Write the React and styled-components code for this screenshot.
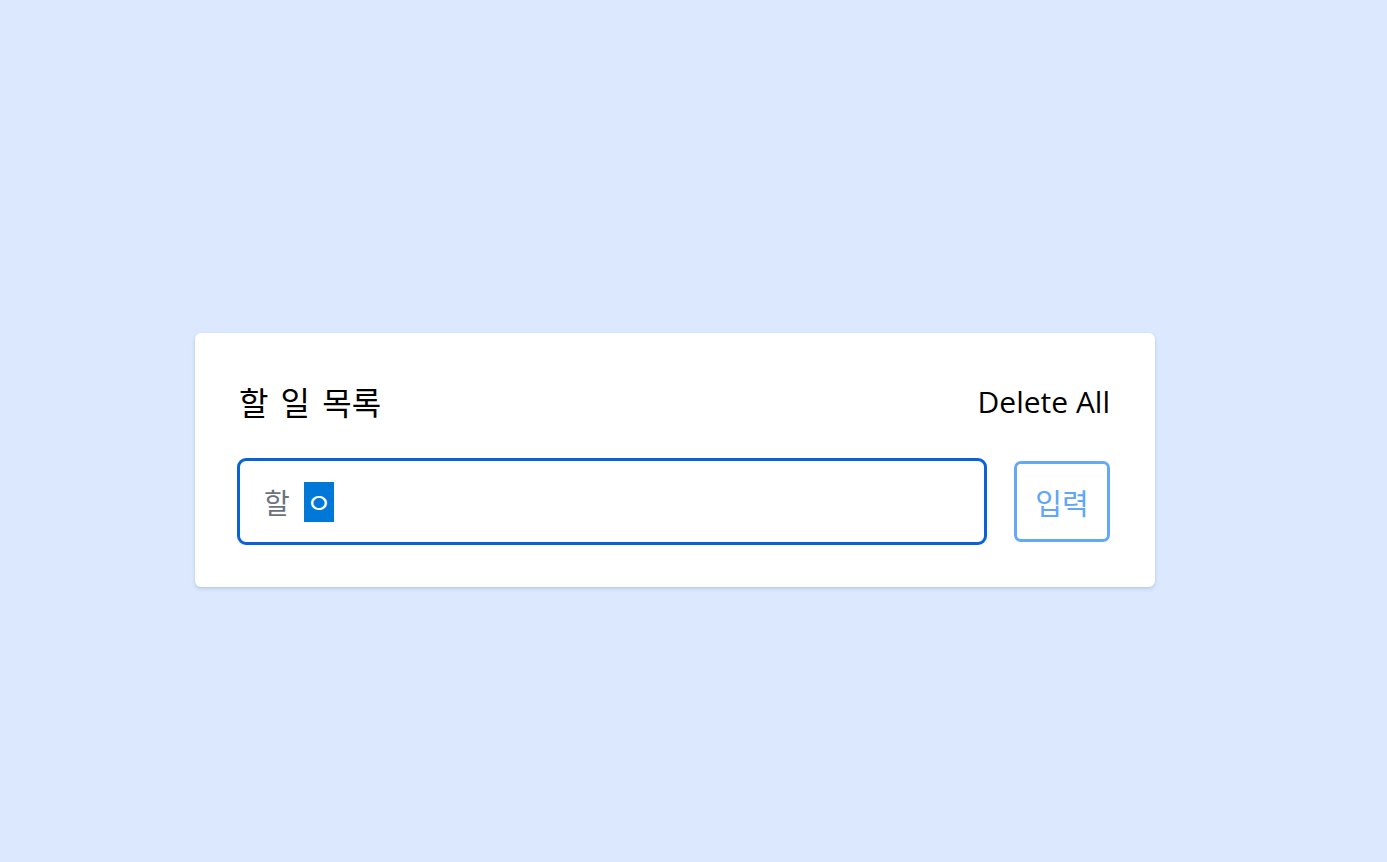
import React from "react";
import styled, { createGlobalStyle } from "styled-components";

const Global = createGlobalStyle`
  html, body { margin: 0; padding: 0; background: #dbe8fe; }
  body { font-family: "Open Sans", "Noto Sans CJK KR", sans-serif; }
  * { box-sizing: border-box; }
`;

const Page = styled.div`
  min-height: 100vh;
  padding: 333px 0 0 195px;
`;

const Card = styled.section`
  width: 960px;
  background: #ffffff;
  border-radius: 6px;
  box-shadow: 0 2px 4px rgba(30, 60, 120, 0.12), 0 1px 2px rgba(30, 60, 120, 0.08);
  padding: 40px 45px 42px 42px;
  display: flex;
  flex-direction: column;
  gap: 29px;
`;

const Header = styled.div`
  display: flex;
  align-items: center;
  justify-content: space-between;
  height: 56px;
  padding-left: 2px;
`;

const Title = styled.h1`
  margin: 0;
  font-size: 32px;
  font-weight: 400;
  color: #000;
  font-family: "Noto Sans CJK KR", sans-serif;
  word-spacing: 5px;
`;

const DeleteAll = styled.button`
  border: none;
  background: none;
  padding: 0;
  font-family: "Open Sans", "Noto Sans CJK KR", sans-serif;
  font-size: 30px;
  color: #000;
  cursor: pointer;
`;

const Form = styled.div`
  display: flex;
  align-items: center;
  gap: 27px;
`;

const Field = styled.div`
  flex: 1;
  height: 87px;
  border: 3px solid #0a62d9;
  border-radius: 9px;
  display: flex;
  align-items: center;
  padding-left: 24px;
  font-family: "Noto Sans CJK KR", sans-serif;
  font-size: 28px;
  color: #6b7280;
`;

const Composing = styled.span`
  display: inline-flex;
  align-items: center;
  justify-content: center;
  width: 30px;
  height: 40px;
  margin-left: 14px;
  background: #0078d7;
  color: #fff;
`;

const Submit = styled.button`
  width: 96px;
  height: 81px;
  border: 3px solid #65a8f8;
  border-radius: 7px;
  background: #fff;
  color: #60a5fa;
  font-family: "Noto Sans CJK KR", sans-serif;
  font-size: 29px;
  padding: 0;
  cursor: pointer;
`;

export default function App() {
  return (
    <>
      <Global />
      <Page>
        <Card>
          <Header>
            <Title>할 일 목록</Title>
            <DeleteAll>Delete All</DeleteAll>
          </Header>
          <Form>
            <Field>
              <span>할</span>
              <Composing>ㅇ</Composing>
            </Field>
            <Submit>입력</Submit>
          </Form>
        </Card>
      </Page>
    </>
  );
}
